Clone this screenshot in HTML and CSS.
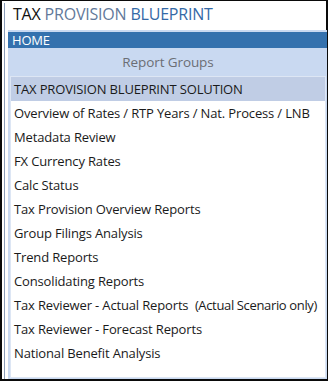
FILE: index.html
```html
<!DOCTYPE html>
<html lang="en">
  <head>
    <meta charset="UTF-8" />
    <title>Tax Provision Blueprint</title>
    <link rel="stylesheet" href="styles.css">
  </head>
  <body>
    <div class="frame">
      <div class="inner">
        <h1 class="title"><span class="title-tax">TAX</span> <span class="title-prov">PROVISION</span> <span class="title-bp">BLUEPRINT</span></h1>

        <section class="panel">
          <div class="home-bar">HOME</div>
          <div class="groups-head">Report Groups</div>
          <ul class="group-list">
            <li class="group-item selected">TAX PROVISION BLUEPRINT SOLUTION</li>
            <li class="group-item">Overview of Rates / RTP Years / Nat. Process / LNB</li>
            <li class="group-item">Metadata Review</li>
            <li class="group-item">FX Currency Rates</li>
            <li class="group-item">Calc Status</li>
            <li class="group-item">Tax Provision Overview Reports</li>
            <li class="group-item">Group Filings Analysis</li>
            <li class="group-item">Trend Reports</li>
            <li class="group-item">Consolidating Reports</li>
            <li class="group-item">Tax Reviewer - Actual Reports &nbsp;<span class="note">(Actual Scenario only)</span></li>
            <li class="group-item">Tax Reviewer - Forecast Reports</li>
            <li class="group-item">National Benefit Analysis</li>
          </ul>
        </section>
      </div>
    </div>
  </body>
</html>
```

FILE: styles.css
```css
/* General styling */
html,
body {
  margin: 0;
  padding: 0;
  background: #ffffff;
}

body {
  font-family: "Open Sans", "Noto Sans", sans-serif;
  color: #1a1a1a;
}

.frame {
  width: 328px;
  height: 381px;
  box-sizing: border-box;
  border: 2px solid #0a0a0a;
  border-top-width: 1px;
  padding: 2px 0 0 2px;
  background: #ffffff;
}

.inner {
  height: 100%;
  box-sizing: border-box;
  border-left: 1px solid #8a9cb8;
  padding-left: 3px;
  display: flex;
  flex-direction: column;
}

.title {
  margin: 0;
  height: 27px;
  padding-left: 5px;
  font-size: 16px;
  font-weight: normal;
  line-height: 23px;
  letter-spacing: -0.2px;
}

.title-tax {
  color: #111111;
}

.title-prov {
  color: #62799a;
}

.title-bp {
  color: #3469a6;
}

.panel {
  flex: 1;
  display: flex;
  flex-direction: column;
  background: #c9d9f1;
  border-top: 2px solid #c9d9f1;
  padding: 0 1px 1px 2px;
  margin-right: -1px;
  min-height: 0;
}

.home-bar {
  background: #3471ae;
  color: #ffffff;
  font-size: 13px;
  height: 16px;
  line-height: 16px;
  padding-left: 4px;
  margin: 0 -1px 0 -2px;
  letter-spacing: -0.2px;
}

.groups-head {
  height: 28px;
  line-height: 28px;
  text-align: center;
  color: #6b6e75;
  font-size: 13.5px;
  letter-spacing: -0.1px;
}

.group-list {
  list-style: none;
  margin: 0;
  padding: 0;
  flex: 1;
  background: #ffffff;
  border: 1px solid #dde6f4;
}

.group-item {
  height: 24px;
  line-height: 24px;
  padding-left: 3px;
  font-size: 13px;
  letter-spacing: -0.15px;
  white-space: nowrap;
}

.group-item.selected {
  background: #c0cde5;
}

.note {
  letter-spacing: -0.35px;
}
```
